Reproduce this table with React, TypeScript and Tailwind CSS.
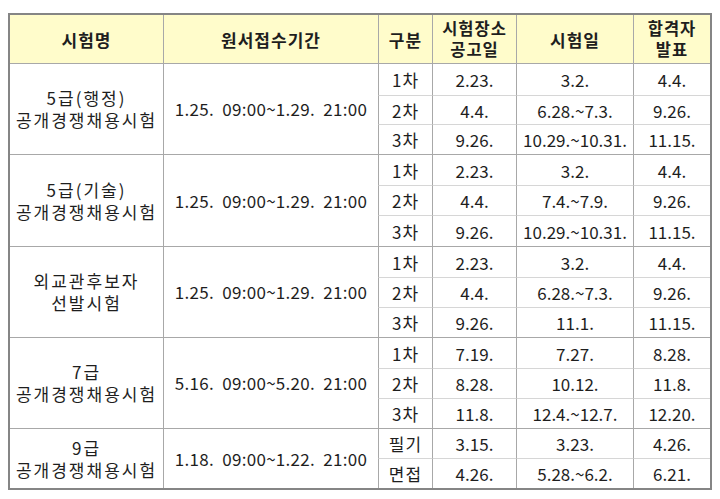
const groups = [
  {
    name: ["5급(행정)", "공개경쟁채용시험"],
    period: "1.25.  09:00~1.29.  21:00",
    rows: [
      ["1차", "2.23.", "3.2.", "4.4."],
      ["2차", "4.4.", "6.28.~7.3.", "9.26."],
      ["3차", "9.26.", "10.29.~10.31.", "11.15."],
    ],
  },
  {
    name: ["5급(기술)", "공개경쟁채용시험"],
    period: "1.25.  09:00~1.29.  21:00",
    rows: [
      ["1차", "2.23.", "3.2.", "4.4."],
      ["2차", "4.4.", "7.4.~7.9.", "9.26."],
      ["3차", "9.26.", "10.29.~10.31.", "11.15."],
    ],
  },
  {
    name: ["외교관후보자", "선발시험"],
    period: "1.25.  09:00~1.29.  21:00",
    rows: [
      ["1차", "2.23.", "3.2.", "4.4."],
      ["2차", "4.4.", "6.28.~7.3.", "9.26."],
      ["3차", "9.26.", "11.1.", "11.15."],
    ],
  },
  {
    name: ["7급", "공개경쟁채용시험"],
    period: "5.16.  09:00~5.20.  21:00",
    rows: [
      ["1차", "7.19.", "7.27.", "8.28."],
      ["2차", "8.28.", "10.12.", "11.8."],
      ["3차", "11.8.", "12.4.~12.7.", "12.20."],
    ],
  },
  {
    name: ["9급", "공개경쟁채용시험"],
    period: "1.18.  09:00~1.22.  21:00",
    rows: [
      ["필기", "3.15.", "3.23.", "4.26."],
      ["면접", "4.26.", "5.28.~6.2.", "6.21."],
    ],
  },
]

const headers = [
  ["시험명"],
  ["원서접수기간"],
  ["구분"],
  ["시험장소", "공고일"],
  ["시험일"],
  ["합격자", "발표"],
]

export default function App() {
  return (
    <div
      className="h-[499px] w-[720px] bg-white pl-[8px] pt-[13px] text-[#1e1e1e]"
      style={{ fontFamily: '"Noto Sans CJK KR", "Noto Sans", sans-serif' }}
    >
      <div className="grid w-[704px] grid-cols-[153px_215px_54px_84px_117px_77px] grid-rows-[48px_32px_29px_30px_31px_30px_31px_31px_30px_30px_31px_30px_30px_30px_30px] border-2 border-[#858585] text-[17px]">
        {headers.map((h, i) => (
          <div
            key={i}
            className={`flex flex-col items-center justify-center bg-[#fffccb] font-bold tracking-[1px] ${
              h.length > 1 ? "text-[16.5px] leading-[21px]" : "text-[17px] leading-none"
            } ${i > 0 ? "border-l border-[#a8a8a8]" : ""}`}
          >
            {h.map((line) => (
              <div key={line}>{line}</div>
            ))}
          </div>
        ))}
        {groups.map((g, gi) => {
          const span = g.rows.length === 3 ? "row-span-3" : "row-span-2"
          return [
            <div
              key={`n${gi}`}
              className={`${span} flex flex-col items-center justify-center border-t border-[#a8a8a8] leading-[22px] tracking-[2px]`}
            >
              {g.name.map((line) => (
                <div key={line}>{line}</div>
              ))}
            </div>,
            <div
              key={`p${gi}`}
              className={`${span} flex items-center justify-center whitespace-pre border-l border-t border-[#a8a8a8] tracking-[0.3px]`}
            >
              {g.period}
            </div>,
            ...g.rows.flatMap((r, ri) =>
              r.map((cell, ci) => (
                <div
                  key={`c${gi}-${ri}-${ci}`}
                  className={`flex items-center justify-center border-l border-t border-l-[#a8a8a8] leading-none ${
                    ci === 0 ? "tracking-[1px]" : ""
                  } ${ri === 0 ? "border-t-[#a8a8a8]" : "border-t-[#d6d6d6]"}`}
                >
                  {cell}
                </div>
              ))
            ),
          ]
        })}
      </div>
    </div>
  )
}
